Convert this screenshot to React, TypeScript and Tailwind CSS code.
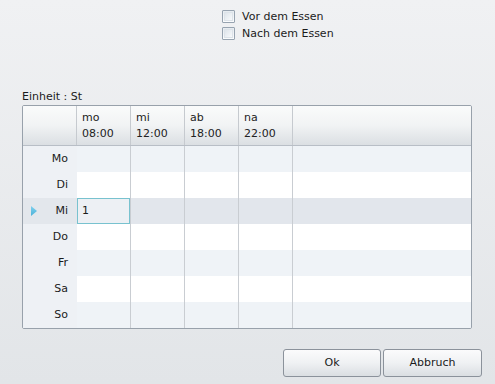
import React from "react";

const cols = [
  ["mo", "08:00"],
  ["mi", "12:00"],
  ["ab", "18:00"],
  ["na", "22:00"],
];
const days = ["Mo", "Di", "Mi", "Do", "Fr", "Sa", "So"];

function Check({ label }: { label: string }) {
  return (
    <div className="flex h-[17px] items-center gap-[7px]">
      <div className="h-[13px] w-[13px] rounded-[1px] border border-[#97a3b0] bg-gradient-to-b from-[#e6ebf0] to-[#fbfcfd] p-[1px]">
        <div className="h-full w-full border border-[#dde3e9] bg-gradient-to-br from-[#dfe5eb] to-[#f7f9fb]" />
      </div>
      <span>{label}</span>
    </div>
  );
}

export default function App() {
  return (
    <div
      className="flex h-[384px] w-[495px] flex-col bg-gradient-to-b from-[#f0f1f3] to-[#e2e5e8] text-[11px] text-[#1b1b1b]"
      style={{ fontFamily: '"DejaVu Sans", Verdana, sans-serif' }}
    >
      <div className="flex flex-col pl-[222px] pt-[8px] leading-[14px]">
        <Check label="Vor dem Essen" />
        <Check label="Nach dem Essen" />
      </div>
      <div className="ml-[22px] mt-[48px] leading-[14px]">Einheit : St</div>
      <div className="ml-[22px] mt-[1px] flex h-[224px] w-[450px] flex-col overflow-hidden rounded-[2px] border border-[#98a1ab] bg-white">
        <div className="flex h-[40px] shrink-0 border-b border-[#b8bec6] bg-gradient-to-b from-[#fafbfb] via-[#f1f3f4] to-[#dbdfe3]">
          <div className="w-[54px] shrink-0 border-r border-[#c6cacf]" />
          {cols.map(([a, b]) => (
            <div
              key={b}
              className="w-[54px] shrink-0 border-r border-[#c6cacf] pl-[5px] pt-[4px] leading-[16px] text-[#222]"
            >
              <div>{a}</div>
              <div>{b}</div>
            </div>
          ))}
          <div className="flex-1" />
        </div>
        {days.map((d, i) => {
          const sel = i === 2;
          const alt = i % 2 === 0;
          const rowBg = sel ? "bg-[#e2e6ec]" : alt ? "bg-[#eff3f7]" : "bg-white";
          return (
            <div key={d} className={`flex h-[26px] shrink-0 ${rowBg}`}>
              <div
                className={`relative flex w-[54px] shrink-0 items-center justify-end pr-[9px] ${
                  sel ? "bg-[#e3e7ec]" : "bg-[#eef1f5]"
                }`}
              >
                {sel && (
                  <svg
                    className="absolute left-[8px] top-[8px]"
                    width="6"
                    height="10"
                    viewBox="0 0 6 10"
                  >
                    <defs>
                      <linearGradient id="tri" x1="0" y1="0" x2="0" y2="1">
                        <stop offset="0" stopColor="#7fd0ee" />
                        <stop offset="1" stopColor="#4cb2d8" />
                      </linearGradient>
                    </defs>
                    <polygon points="0,0 6,5 0,10" fill="url(#tri)" />
                  </svg>
                )}
                {d}
              </div>
              {cols.map(([, b], j) => (
                <div
                  key={b}
                  className="w-[54px] shrink-0 border-r border-[#c9cdd2]"
                >
                  {sel && j === 0 && (
                    <div className="flex h-full w-full items-center border border-[#78c2cf] bg-[#edf0f4] pl-[4px]">
                      1
                    </div>
                  )}
                </div>
              ))}
              <div className="flex-1" />
            </div>
          );
        })}
      </div>
      <div className="mt-[20px] flex gap-[2px] pl-[283px]">
        <button className="h-[28px] w-[98px] rounded-[3px] border border-[#8b929b] bg-gradient-to-b from-[#fbfbfc] via-[#eff1f3] to-[#dadee2] text-[#1b1b1b]">
          Ok
        </button>
        <button className="h-[28px] w-[99px] rounded-[3px] border border-[#8b929b] bg-gradient-to-b from-[#fbfbfc] via-[#eff1f3] to-[#dadee2] text-[#1b1b1b]">
          Abbruch
        </button>
      </div>
    </div>
  );
}
